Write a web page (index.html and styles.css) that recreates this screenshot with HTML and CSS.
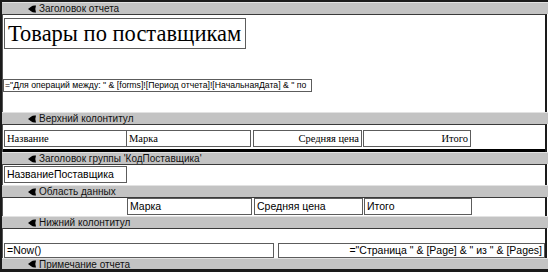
FILE: index.html
```html
<!DOCTYPE html>
<html lang="ru">
<head>
<meta charset="utf-8">
<link rel="stylesheet" href="styles.css">
</head>
<body>
<div class="report">
  <div class="band"><svg class="ico" viewBox="0 0 8 8"><path d="M8 0.5 Q5 0 3 1.8 L0 4 L3 6.2 Q5 8 8 7.5 Q6.6 4 8 0.5 Z"/></svg>Заголовок отчета</div>
  <div class="sec sec-rh">
    <div class="box title">Товары по поставщикам</div>
    <div class="box formula">="Для операций между: " &amp; [forms]![Период отчета]![НачальнаяДата] &amp; " по</div>
  </div>
  <div class="band"><svg class="ico" viewBox="0 0 8 8"><path d="M8 0.5 Q5 0 3 1.8 L0 4 L3 6.2 Q5 8 8 7.5 Q6.6 4 8 0.5 Z"/></svg>Верхний колонтитул</div>
  <div class="sec sec-ph">
    <div class="row ph-row">
      <div class="box serif c1">Название</div>
      <div class="box serif c2">Марка</div>
      <div class="box serif c3 right">Средняя цена</div>
      <div class="box serif c4 right">Итого</div>
    </div>
  </div>
  <div class="band"><svg class="ico" viewBox="0 0 8 8"><path d="M8 0.5 Q5 0 3 1.8 L0 4 L3 6.2 Q5 8 8 7.5 Q6.6 4 8 0.5 Z"/></svg>Заголовок группы 'КодПоставщика'</div>
  <div class="sec sec-gh">
    <div class="box sans c1">НазваниеПоставщика</div>
  </div>
  <div class="band"><svg class="ico" viewBox="0 0 8 8"><path d="M8 0.5 Q5 0 3 1.8 L0 4 L3 6.2 Q5 8 8 7.5 Q6.6 4 8 0.5 Z"/></svg>Область данных</div>
  <div class="sec sec-d">
    <div class="row d-row">
      <div class="box sans c2">Марка</div>
      <div class="box sans c3">Средняя цена</div>
      <div class="box sans c4">Итого</div>
    </div>
  </div>
  <div class="band"><svg class="ico" viewBox="0 0 8 8"><path d="M8 0.5 Q5 0 3 1.8 L0 4 L3 6.2 Q5 8 8 7.5 Q6.6 4 8 0.5 Z"/></svg>Нижний колонтитул</div>
  <div class="sec sec-pf">
    <div class="row">
      <div class="box sans now">=Now()</div>
      <div class="box sans pages right">="Страница " &amp; [Page] &amp; " из " &amp; [Pages]</div>
    </div>
  </div>
  <div class="band band-last"><svg class="ico" viewBox="0 0 8 8"><path d="M8 0.5 Q5 0 3 1.8 L0 4 L3 6.2 Q5 8 8 7.5 Q6.6 4 8 0.5 Z"/></svg>Примечание отчета</div>
</div>
</body>
</html>
```

FILE: styles.css
```css
html, body {
  margin: 0;
  padding: 0;
  background: #ffffff;
}
.report {
  width: 548px;
  height: 272px;
  box-sizing: border-box;
  border-top: 2px solid #1a1a1a;
  border-left: 2px solid #1a1a1a;
  border-bottom: 3px solid #1a1a1a;
  display: flex;
  flex-direction: column;
  overflow: hidden;
  font-family: "Liberation Sans", Arial, sans-serif;
}
.band {
  height: 12px;
  box-sizing: border-box;
  background: #c3c3c3;
  border-top: 1px solid #e2e2e2;
  display: flex;
  align-items: center;
  padding-left: 26px;
  font-size: 10px;
  color: #111;
  line-height: 11px;
  white-space: nowrap;
}
.ico {
  width: 8px;
  height: 8px;
  margin-right: 3px;
  fill: #000;
}
.sec {
  box-sizing: border-box;
  width: 545px;
  background: #fff;
  border-top: 1px solid #3a3a3a;
  border-left: 1px solid #555;
  border-right: 2px solid #1a1a1a;
  display: flex;
  flex-direction: column;
}
.box {
  box-sizing: border-box;
  border: 1px solid #5c5c5c;
  background: #fff;
  white-space: nowrap;
  overflow: hidden;
  color: #000;
}
.sec-rh {
  height: 98px;
  padding-top: 3px;
}
.title {
  margin-left: 1px;
  width: 242px;
  height: 31px;
  font-family: "Liberation Serif", "Times New Roman", serif;
  font-size: 22.5px;
  line-height: 29px;
  padding-left: 3px;
}
.formula {
  margin-top: 30px;
  width: 309px;
  height: 13px;
  font-size: 8.7px;
  line-height: 11px;
  padding-left: 1px;
}
.row {
  display: flex;
}
.sec-ph {
  height: 28px;
  padding-top: 5px;
}
.ph-row {
  height: 22px;
  border-bottom: 3px solid #000;
  align-items: flex-start;
}
.serif {
  font-family: "Liberation Serif", "Times New Roman", serif;
  font-size: 10.5px;
  height: 17px;
  line-height: 15px;
  padding: 0 2px;
}
.sans {
  font-size: 10.5px;
  height: 17px;
  line-height: 15px;
  padding: 0 2px;
}
.right {
  text-align: right;
}
.c1 {
  margin-left: 1px;
  width: 123px;
}
.c2 {
  margin-left: -1px;
  width: 125px;
}
.c3 {
  margin-left: 2px;
  width: 109px;
}
.c4 {
  margin-left: 1px;
  width: 108px;
}
.sec-gh {
  height: 21px;
  padding-top: 1px;
}
.sec-d {
  height: 19px;
  padding-top: 0;
}
.d-row .c2 {
  margin-left: 124px;
}
.sec-pf {
  height: 30px;
  padding-top: 14px;
}
.now {
  margin-left: 1px;
  width: 270px;
  height: 15px;
  line-height: 13px;
}
.pages {
  margin-left: 4px;
  width: 268px;
  height: 15px;
  line-height: 13px;
}
.band-last {
  height: 11px;
}
```
